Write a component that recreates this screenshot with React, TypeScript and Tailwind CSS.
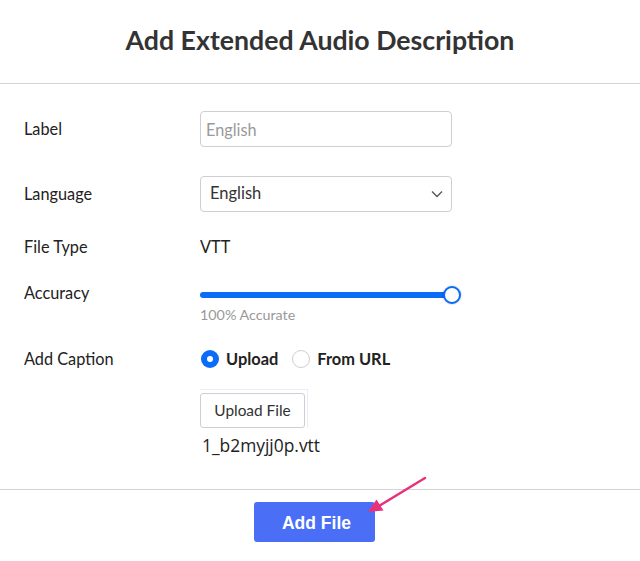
import React from "react";

const FONT = { fontFamily: "Lato, 'Open Sans', sans-serif" };

function Row({ label, children, className = "" }: { label: string; children: React.ReactNode; className?: string }) {
  return (
    <div className={`flex ${className}`}>
      <div className="w-[200px] shrink-0 pl-6 text-[16.3px] leading-6 text-[#222]">{label}</div>
      <div className="w-[252px]">{children}</div>
    </div>
  );
}

export default function App() {
  return (
    <div className="relative w-[640px] h-[561px] bg-white overflow-hidden" style={FONT}>
      <header className="h-[84px] border-b border-[#d4d4d4] flex items-center justify-center pb-[2px]">
        <h1 className="text-[26.7px] font-bold text-[#333]">Add Extended Audio Description</h1>
      </header>

      <div className="pt-[27px]">
        <div className="flex items-center h-9">
          <div className="w-[200px] shrink-0 pl-6 text-[16.3px] text-[#222]">Label</div>
          <input
            placeholder="English"
            className="w-[252px] h-9 border border-[#cfcfcf] rounded-[4px] pl-[5px] text-[16.3px] text-[#333] placeholder:text-[#9a9a9a] outline-none"
          />
        </div>

        <div className="flex items-center h-9 mt-[29px]">
          <div className="w-[200px] shrink-0 pl-6 text-[16.3px] text-[#222]">Language</div>
          <div className="w-[252px] h-9 border border-[#cfcfcf] rounded-[4px] pl-[9px] pr-[7px] pb-[1px] flex items-center justify-between text-[16.5px] text-[#333]">
            <span>English</span>
            <svg width="14" height="14" viewBox="0 0 14 14" fill="none">
              <path d="M2 4.5l5 5 5-5" stroke="#555" strokeWidth="1.3" />
            </svg>
          </div>
        </div>

        <Row label="File Type" className="mt-[23px]">
          <span className="text-[16.3px] leading-6 text-[#222]">VTT</span>
        </Row>

        <Row label="Accuracy" className="mt-[22px]">
          <div className="pt-[2px]">
            <div className="relative h-6 flex items-center">
              <div className="w-full h-[6px] rounded-full bg-[#0a6cf7]" />
              <div className="absolute right-[-9px] top-[3px] w-[18px] h-[18px] rounded-full bg-white border-2 border-[#0a6cf7] shadow-[0_0_2px_rgba(0,0,0,0.3)]" />
            </div>
            <div className="text-[14.3px] leading-4 text-[#999]">100% Accurate</div>
          </div>
        </Row>

        <Row label="Add Caption" className="mt-[24px]">
          <div className="flex items-center h-6 text-[16.4px] font-bold text-[#222]">
            <span className="w-[18px] h-[18px] ml-[1px] rounded-full bg-[#0a6cf7] flex items-center justify-center">
              <span className="w-[6px] h-[6px] rounded-full bg-white" />
            </span>
            <span className="ml-[7px]">Upload</span>
            <span className="w-[18px] h-[18px] ml-[14px] rounded-full border border-[#cfcfcf]" />
            <span className="ml-[7px]">From URL</span>
          </div>
          <div className="mt-[18px] w-[108px] border-t border-r border-[#e8eef7] pt-[3px]">
            <div className="w-[105px] h-[35px] border border-[#cfcfcf] rounded-[3px] flex items-center justify-center text-[15.4px] text-[#333]">
              Upload File
            </div>
          </div>
          <div className="mt-[5px] pl-[2px] text-[17.4px] leading-6 text-[#222]" style={{ fontFamily: "'Open Sans', sans-serif" }}>
            1_b2myjj0p.vtt
          </div>
        </Row>
      </div>

      <footer className="mt-[32px] border-t border-[#d4d4d4] pt-3 flex justify-center pr-[11px]">
        <button
          type="button"
          className="w-[121px] h-10 pt-[2px] pl-[4px] rounded-[3px] bg-[#4a6ff6] text-white text-[17.5px] font-bold"
          style={{ fontFamily: "'Liberation Sans', Arial, sans-serif" }}
        >
          Add File
        </button>
      </footer>

      <svg className="absolute left-0 top-0 pointer-events-none" width="640" height="561">
        <line x1="425" y1="478" x2="374" y2="509" stroke="#e8317a" strokeWidth="2.5" strokeLinecap="round" />
        <polygon points="368,512 376.5,499.5 383.5,510.5" fill="#e8317a" />
      </svg>
    </div>
  );
}
